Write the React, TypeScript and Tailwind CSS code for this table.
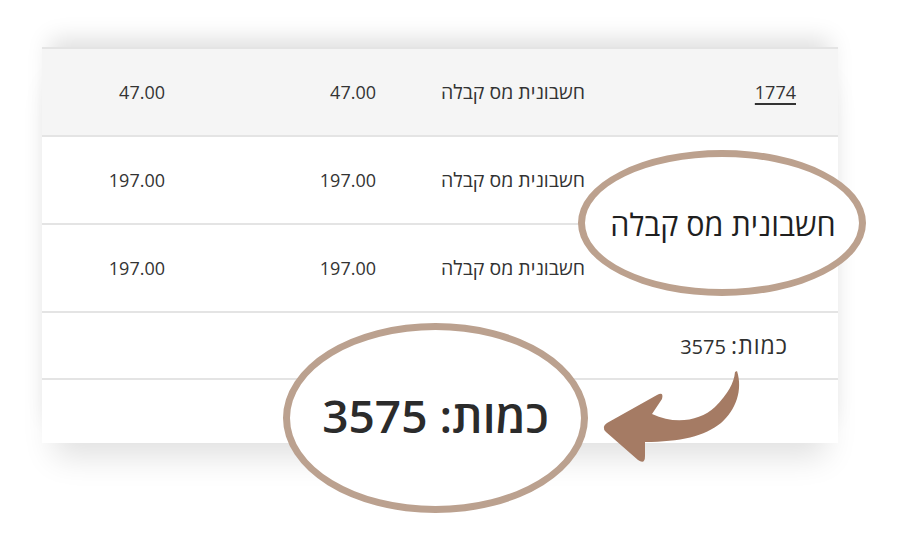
import React from "react";

const rows = [
  { id: "1774", type: "חשבונית מס קבלה", a: "47.00", b: "47.00", bg: "bg-[#f5f5f5]" },
  { id: "", type: "חשבונית מס קבלה", a: "197.00", b: "197.00", bg: "bg-white" },
  { id: "", type: "חשבונית מס קבלה", a: "197.00", b: "197.00", bg: "bg-white" },
];

export default function App() {
  return (
    <div
      className="relative w-[900px] h-[533px] overflow-hidden bg-white text-[#333333]"
      style={{ fontFamily: '"Open Sans", "DejaVu Sans", sans-serif' }}
    >
      <div className="h-[47px]" />
      <div className="ml-[42px] w-[796px] bg-white shadow-[0_-16px_22px_-8px_rgba(0,0,0,0.13),0_26px_30px_-12px_rgba(0,0,0,0.12)]">
        {rows.map((r, i) => (
          <div
            key={i}
            dir="rtl"
            className={`grid grid-cols-[210px_210px_210px_166px] items-center h-[88px] border-b-2 border-[#e4e4e4] ${
              i === 0 ? "border-t-2 h-[90px]" : ""
            } ${r.bg}`}
          >
            <div className="pr-[42px] text-[18px]">
              {r.id && (
                <span className="underline decoration-[1.5px] underline-offset-[4px]">{r.id}</span>
              )}
            </div>
            <div className="pr-[43px] text-[19.5px]">{r.type}</div>
            <div className="pr-[42px] text-[18px]">{r.a}</div>
            <div className="pr-[43px] text-[18px]">{r.b}</div>
          </div>
        ))}
        <div dir="rtl" className="flex items-center h-[67px] border-b-2 border-[#e4e4e4] pr-[50px]">
          <span className="text-[20px] text-[#303030]">
            <span className="text-[23px] tracking-[1px]">כמות:</span> 3575
          </span>
        </div>
        <div className="h-[63px]" />
      </div>

      {/* Highlight ellipse 1 */}
      <div className="absolute left-[578px] top-[150px] w-[288px] h-[146px] rounded-[50%] border-[7px] border-[#bca18e] bg-white flex items-center justify-center">
        <span dir="rtl" className="text-[30.5px] text-[#1f1f1f] leading-none pt-[2px] pl-[2px]">
          חשבונית מס קבלה
        </span>
      </div>

      {/* Highlight ellipse 2 */}
      <div className="absolute left-[283px] top-[323px] w-[305px] h-[190px] rounded-[50%] border-[7px] border-[#bba18f] bg-white flex items-center justify-center">
        <span dir="rtl" className="text-[46px] font-semibold text-[#2b2b2b] leading-none -mt-[6px]">
          כמות: 3575
        </span>
      </div>

      {/* Curved arrow */}
      <svg className="absolute left-0 top-0" width="900" height="533" viewBox="0 0 900 533">
        <path
          d="M737 371 C743 390 736 410 721 423 C705 436 680 442 645 442 L645 456 Q645 465 638 460 L606 432 Q601 427 607 423 L657 395 Q664 391 662 399 L652 414 C675 425 700 421 715 407 C728 394 734 383 735 372 Z"
          fill="#a57b64"
        />
      </svg>
    </div>
  );
}
